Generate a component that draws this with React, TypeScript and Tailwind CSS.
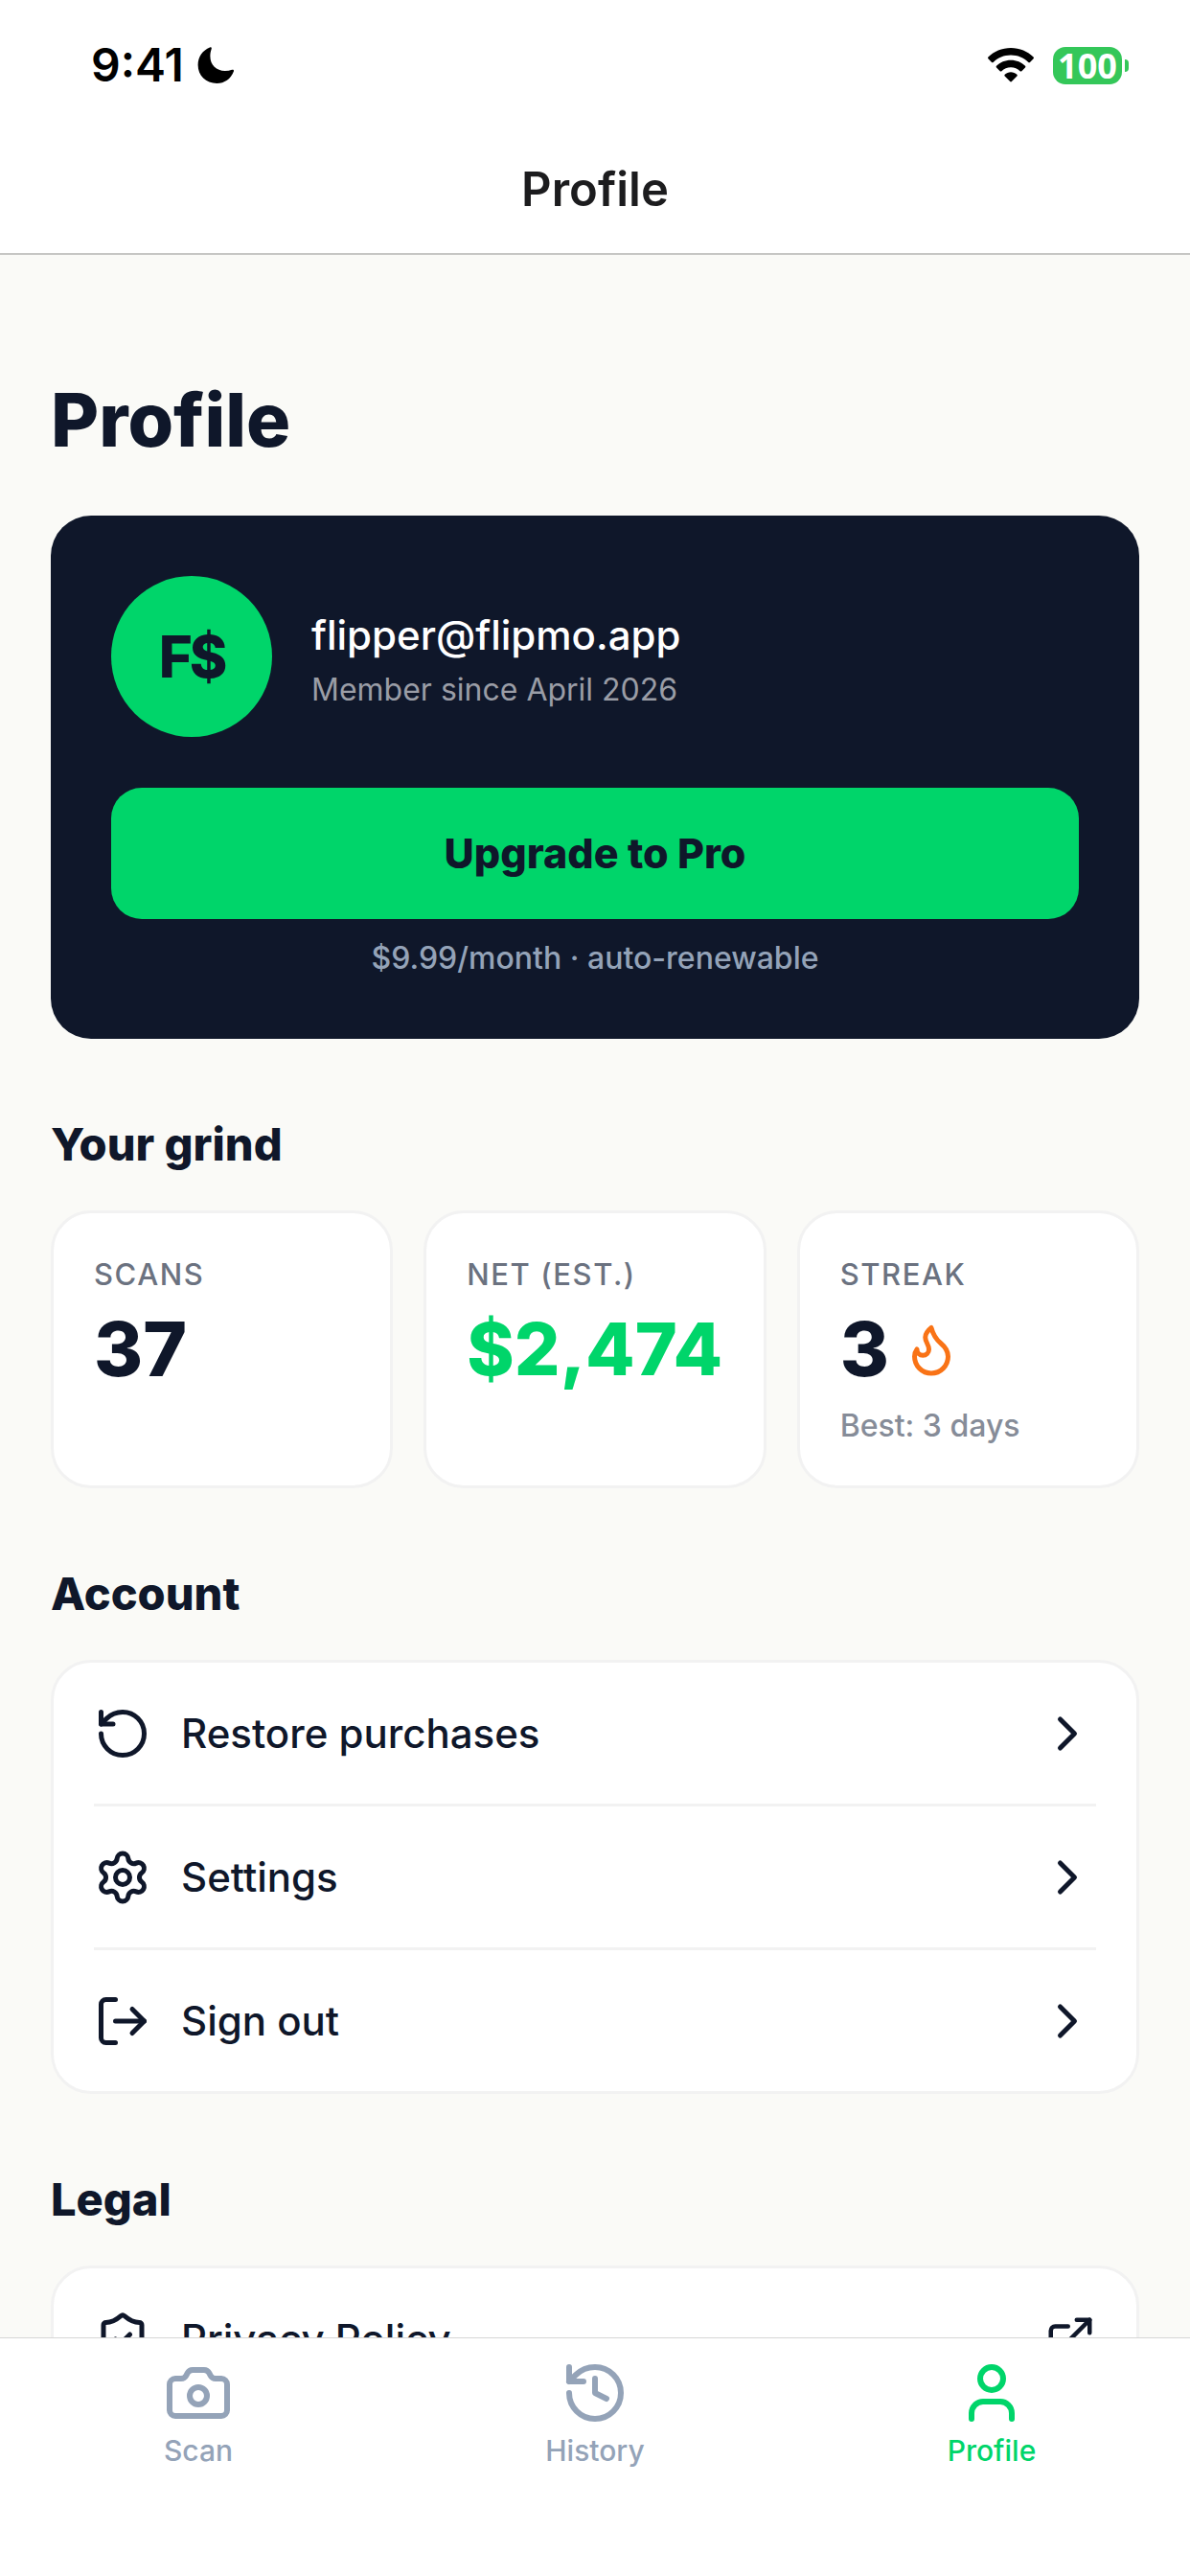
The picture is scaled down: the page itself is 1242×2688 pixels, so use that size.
import type { ReactNode } from 'react';
import {
  Camera,
  ChevronRight,
  ExternalLink,
  Flame,
  History,
  LogOut,
  RotateCcw,
  Settings,
  ShieldCheck,
  User,
  type LucideIcon,
} from 'lucide-react';

interface RowProps {
  icon: LucideIcon;
  label: string;
  external?: boolean;
}

const accountRows: RowProps[] = [
  { icon: RotateCcw, label: 'Restore purchases' },
  { icon: Settings, label: 'Settings' },
  { icon: LogOut, label: 'Sign out' },
];

const legalRows: RowProps[] = [{ icon: ShieldCheck, label: 'Privacy Policy', external: true }];

const tabs = [
  { icon: Camera, label: 'Scan', active: false },
  { icon: History, label: 'History', active: false },
  { icon: User, label: 'Profile', active: true },
];

function StatusBar() {
  return (
    <div className="flex items-center justify-between pt-[38px] pr-[64px] pl-[95px]">
      <div className="flex items-center gap-[14px]">
        <span className="text-[48px] leading-[60px] font-semibold text-black">9:41</span>
        <svg className="h-[39px] w-[39px]" viewBox="0 0 39 39" aria-label="Do not disturb">
          <path
            d="M13 .6c1.200-.7 2.200-.1 1.700 1.300-1 3-1.300 5.300-1.300 7.900 0 9 6.400 15.200 15.500 15.200 2.600 0 4.900-.4 7.200-1.200 1.400-.5 2.400.3 1.800 1.700C34.900 33.300 28.300 38 20.300 38 9 38 .6 29.800.6 18.800.6 10.600 5.600 3.500 13 .6z"
            fill="#000"
          />
        </svg>
      </div>
      <div className="flex items-center gap-[20px]">
        <svg className="h-[37px] w-[48px]" viewBox="0 0 48 37" aria-label="Wi-Fi">
          <path d="M24 0C14.700 0 6.300 3.600.4 9.500c-.5.500-.5 1.200 0 1.700l3.600 3.700c.5.500 1.200.5 1.700 0C10.400 10.400 16.900 7.600 24 7.600s13.600 2.800 18.300 7.300c.5.500 1.200.5 1.700 0l3.600-3.700c.5-.5.5-1.200 0-1.700C41.700 3.600 33.300 0 24 0z" />
          <path d="M24 12.700c-5.900 0-11.200 2.300-15 6-.5.500-.5 1.200 0 1.700l3.700 3.800c.5.500 1.200.5 1.700 0 2.500-2.400 5.900-3.900 9.600-3.900s7.100 1.500 9.600 3.900c.5.500 1.200.5 1.700 0l3.700-3.800c.5-.5.5-1.200 0-1.700-3.800-3.700-9.100-6-15-6z" />
          <path d="M24 25.300c-2.400 0-4.600.9-6.300 2.400-.5.500-.5 1.200 0 1.700l5.500 5.700c.5.500 1.200.5 1.700 0l5.500-5.700c.5-.5.5-1.200 0-1.700-1.700-1.500-4-2.400-6.400-2.400z" />
        </svg>
        <div className="flex items-center gap-[3px]">
          <span className="flex h-[39px] w-[72px] items-center justify-center rounded-[13px] bg-[#34c759] font-['Noto_Sans',sans-serif] text-[36px] leading-[39px] font-bold text-white">
            100
          </span>
          <span className="h-[13px] w-[4px] rounded-r-full bg-[#34c759]" />
        </div>
      </div>
    </div>
  );
}

function Section({ title, children }: { title: string; children: ReactNode }) {
  return (
    <section className="mt-[82px]">
      <h2 className="mb-[41px] text-[47px] leading-[56px] font-extrabold">{title}</h2>
      {children}
    </section>
  );
}

function StatCard({ label, children }: { label: string; children: ReactNode }) {
  return (
    <div className="rounded-[42px] border-3 border-[#f2f2f2] bg-white px-[42px] pt-[42px] pb-[40px]">
      <p className="text-[31px] leading-[44px] font-medium tracking-wider text-[#6b7280]">{label}</p>
      {children}
    </div>
  );
}

function RowList({ rows }: { rows: RowProps[] }) {
  return (
    <ul className="rounded-[42px] border-3 border-[#f2f2f2] bg-white px-[42px]">
      {rows.map(({ icon: Icon, label, external }) => (
        <li key={label} className="border-b-3 border-[#f2f2f2] last:border-b-0">
          <button className="flex h-[147px] w-full items-center gap-[31px] text-left text-[42px] font-medium">
            <Icon size={60} />
            <span className="flex-1">{label}</span>
            {external ? <ExternalLink size={54} /> : <ChevronRight size={60} />}
          </button>
        </li>
      ))}
    </ul>
  );
}

export default function App() {
  return (
    <div className="flex h-screen flex-col bg-[#fafaf7] font-[Inter,sans-serif] text-[#0f172a]">
      <header className="h-[266px] shrink-0 border-b-2 border-[#c6c6c4] bg-white">
        <StatusBar />
        <p className="mt-[70px] text-center text-[49px] leading-[60px] font-semibold text-[#1c1c1e]">Profile</p>
      </header>

      <main className="min-h-0 flex-1 overflow-y-auto px-[53px] [scrollbar-width:none]">
        <h1 className="mt-[124px] text-[77px] leading-[96px] font-extrabold">Profile</h1>

        <div className="mt-[52px] rounded-[42px] bg-[#0f172a] p-[63px]">
          <div className="flex items-center gap-[41px]">
            <div className="flex size-[168px] items-center justify-center rounded-full bg-[#00d56a] text-[60px] font-extrabold tracking-tighter">
              F$
            </div>
            <div className="pt-[6px]">
              <p className="text-[42px] leading-[56px] font-medium text-white">flipper@flipmo.app</p>
              <p className="mt-[8px] text-[32px] leading-[42px] text-[#9a9da6]">Member since April 2026</p>
            </div>
          </div>
          <button className="mt-[53px] h-[137px] w-full rounded-[32px] bg-[#00d56a] text-[43px] font-extrabold">
            Upgrade to Pro
          </button>
          <p className="mt-[20px] text-center text-[32px] leading-[42px] font-medium text-[#94a3b8]">
            $9.99/month · auto-renewable
          </p>
        </div>

        <Section title="Your grind">
          <div className="grid grid-cols-3 gap-[32px]">
            <StatCard label="SCANS">
              <p className="mt-[12px] text-[78px] leading-[88px] font-extrabold">37</p>
            </StatCard>
            <StatCard label="NET (EST.)">
              <p className="mt-[12px] text-[75px] leading-[88px] font-extrabold text-[#00d56a]">$2,474</p>
            </StatCard>
            <StatCard label="STREAK">
              <div className="mt-[12px] flex items-center gap-[14px]">
                <span className="text-[78px] leading-[88px] font-extrabold">3</span>
                <Flame size={60} className="text-[#f97316]" />
              </div>
              <p className="mt-[14px] text-[32px] leading-[44px] font-medium text-[#868c98]">Best: 3 days</p>
            </StatCard>
          </div>
        </Section>

        <Section title="Account">
          <RowList rows={accountRows} />
        </Section>

        <Section title="Legal">
          <RowList rows={legalRows} />
        </Section>
      </main>

      <nav className="grid h-[249px] shrink-0 grid-cols-3 items-start border-t border-[#d6d6d6] bg-white pt-[21px]">
        {tabs.map(({ icon: Icon, label, active }) => (
          <a
            key={label}
            href="#"
            className={`flex flex-col items-center gap-[4px] text-[30px] leading-[40px] font-medium ${
              active ? 'text-[#00d56a]' : 'text-[#94a3b8]'
            }`}
          >
            <Icon size={72} />
            {label}
          </a>
        ))}
      </nav>
    </div>
  );
}
